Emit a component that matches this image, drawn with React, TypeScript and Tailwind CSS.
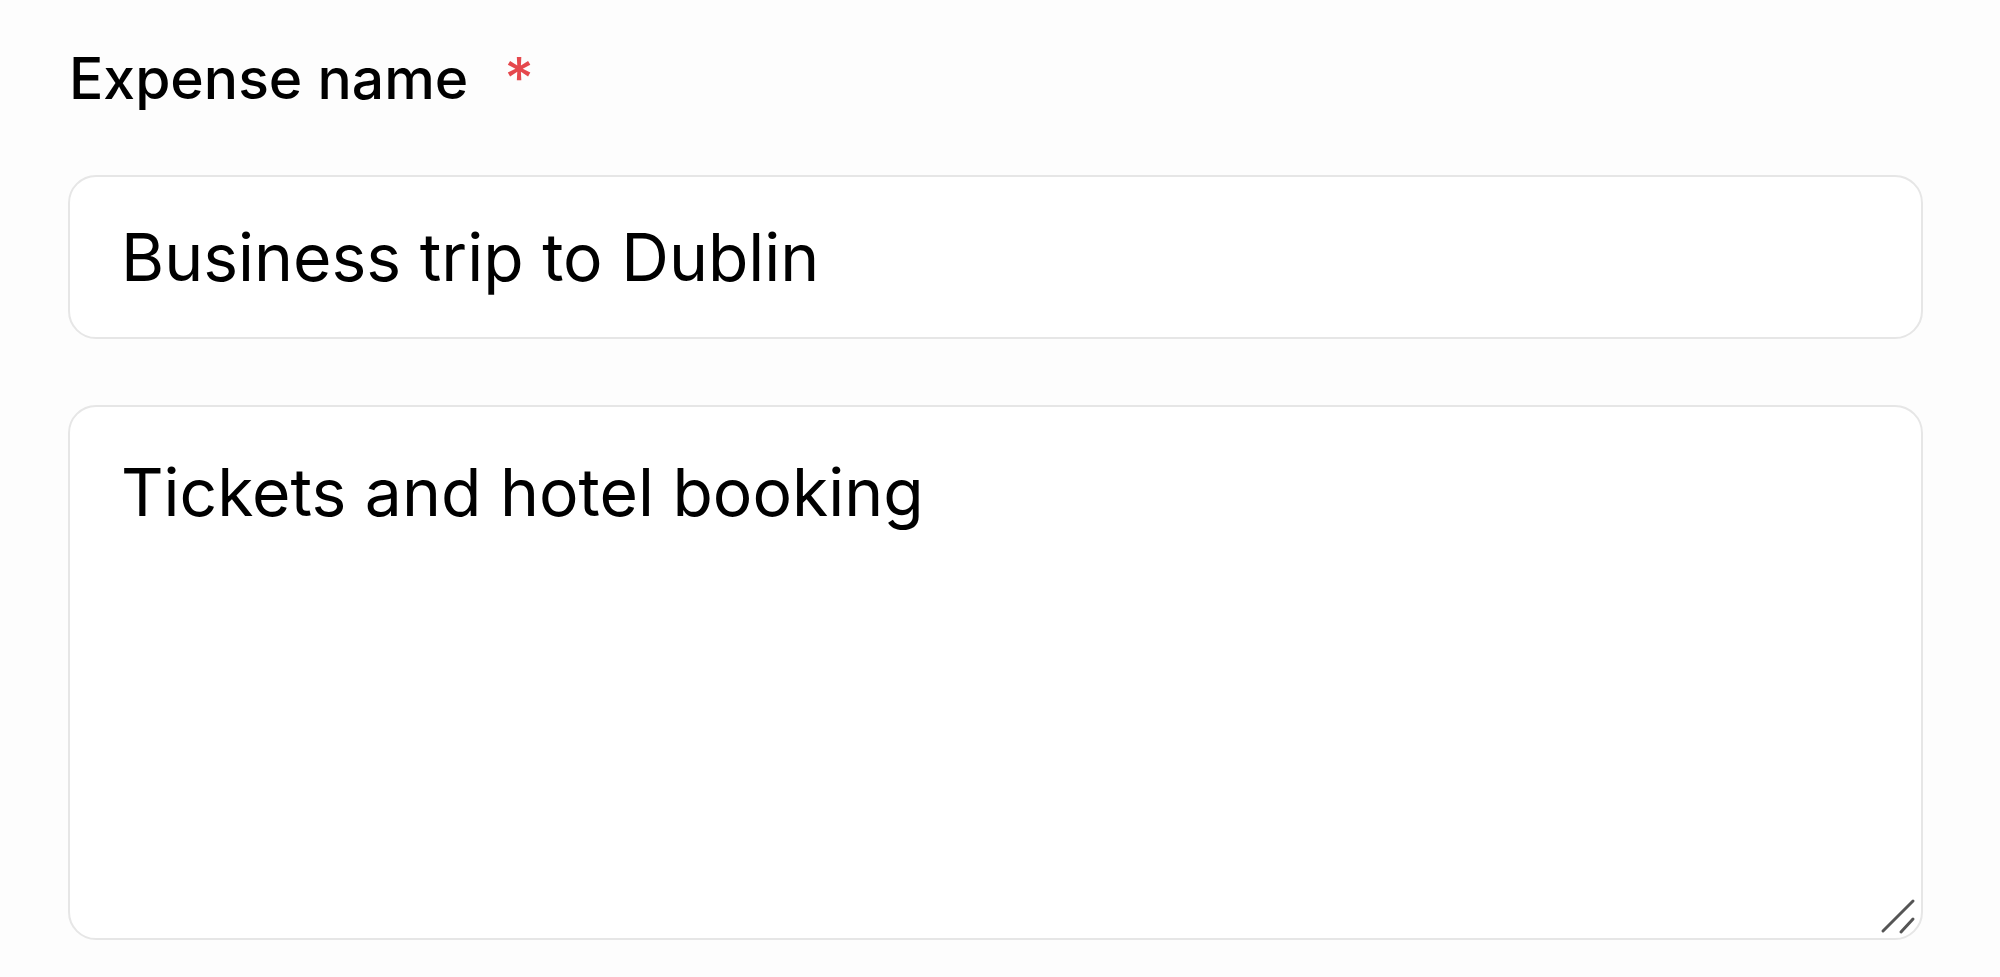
import React from 'react';

const ResizeGrip = () => (
    <svg className="pointer-events-none absolute right-[6px] bottom-[5px]" width="38" height="38" viewBox="0 0 38 38">
        <line x1="4" y1="34" x2="34" y2="4" stroke="#555" strokeWidth="3" strokeLinecap="round" />
        <line x1="22" y1="35" x2="34" y2="22" stroke="#555" strokeWidth="3" strokeLinecap="round" />
    </svg>
);

const App = () => {
    return (
        <div className="min-h-screen bg-[#fdfdfd] px-[68px] pt-[45px] font-['Inter','Liberation_Sans',sans-serif] text-black">
            <label className="flex items-start text-[57px] leading-[67px] font-medium">
                <span className="pl-[1px]">Expense name</span>
                <span className="ml-[36px] text-[#e5484d]">*</span>
            </label>

            <div className="mt-[63px] flex flex-col gap-[66px] w-[1855px]">
                <input
                    readOnly
                    defaultValue="Business trip to Dublin"
                    className="h-[164px] w-full rounded-[28px] border-2 border-[#e6e6e6] bg-white px-[51px] text-[66px] text-black outline-none"
                />
                <div className="relative">
                    <textarea
                        readOnly
                        defaultValue="Tickets and hotel booking"
                        className="block h-[535px] w-full resize-none rounded-[28px] border-2 border-[#e6e6e6] bg-white px-[51px] pt-[45px] text-[66px] leading-[80px] text-black outline-none"
                    />
                    <ResizeGrip />
                </div>
            </div>
        </div>
    );
};

export default App;
